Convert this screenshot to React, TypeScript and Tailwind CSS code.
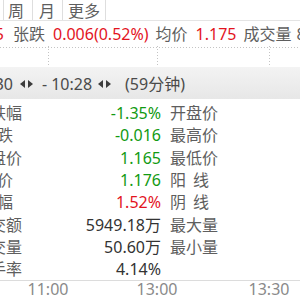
import React from "react";

type Tone = "green" | "red" | "dark";

const toneClass: Record<Tone, string> = {
  green: "text-[#129a12]",
  red: "text-[#e3141e]",
  dark: "text-[#333333]",
};

const rows: { label: string[]; value: string; tone: Tone; right: string[] }[] = [
  { label: ["涨跌幅"], value: "-1.35%", tone: "green", right: ["开盘价"] },
  { label: ["涨", "跌"], value: "-0.016", tone: "green", right: ["最高价"] },
  { label: ["收盘价"], value: "1.165", tone: "green", right: ["最低价"] },
  { label: ["均", "价"], value: "1.176", tone: "green", right: ["阳", "线"] },
  { label: ["振", "幅"], value: "1.52%", tone: "red", right: ["阴", "线"] },
  { label: ["成交额"], value: "5949.18万", tone: "dark", right: ["最大量"] },
  { label: ["成交量"], value: "50.60万", tone: "dark", right: ["最小量"] },
  { label: ["换手率"], value: "4.14%", tone: "dark", right: [] },
];

// two-char labels are spread with a half-width gap, like the original table
function Label({ parts }: { parts: string[] }) {
  if (parts.length < 2) return <>{parts[0]}</>;
  return (
    <>
      <span>{parts[0]}</span>
      <span className="ml-[7px]">{parts[1]}</span>
    </>
  );
}

function Arrows() {
  return (
    <svg width="13" height="8" viewBox="0 0 13 8" className="shrink-0">
      <polygon points="5,0 5,8 0,4" fill="#3c3c3c" />
      <polygon points="8,0 8,8 13,4" fill="#3c3c3c" />
    </svg>
  );
}

export default function App() {
  return (
    <div className="w-[300px] h-[300px] overflow-hidden bg-white font-['Noto_Sans','Noto_Sans_CJK_SC',sans-serif] text-[16px] leading-none text-[#5e5e5e] flex flex-col">
      {/* period tabs */}
      <div className="h-[21px] shrink-0 flex border-b border-[#e4e4e4]">
        <div className="w-[4px] border-r border-[#dedede]" />
        <div className="w-[29px] flex items-center pl-[4px] border-r border-[#dedede] pt-[2px]">周</div>
        <div className="w-[30px] flex items-center pl-[6px] border-r border-[#dedede] pt-[2px]">月</div>
        <div className="w-[43px] flex items-center pl-[5px] border-r border-[#dedede] pt-[2px]">更多</div>
      </div>

      {/* quote line */}
      <div className="h-[25px] shrink-0 flex items-center whitespace-nowrap">
        <span className="w-[42px] -ml-[38px] shrink-0 text-right text-[#e3141e]">1.165</span>
        <span className="ml-[9px]">张跌</span>
        <span className="ml-[8px] text-[#e3141e]">0.006(0.52%)</span>
        <span className="ml-[7px]">均价</span>
        <span className="ml-[8px] text-[#e3141e]">1.175</span>
        <span className="ml-[7px]">成交量</span>
        <span className="ml-[5px]">8</span>
      </div>

      {/* chart grid peeking above the panel */}
      <svg width="300" height="21" className="shrink-0 block">
        <line x1="0" y1="1.5" x2="300" y2="1.5" stroke="#c4c4c4" strokeDasharray="1 2" />
        <line x1="48.5" y1="0" x2="48.5" y2="21" stroke="#c4c4c4" strokeDasharray="1 2" />
        <line x1="157.5" y1="0" x2="157.5" y2="21" stroke="#c4c4c4" strokeDasharray="1 2" />
        <line x1="269.5" y1="0" x2="269.5" y2="21" stroke="#c4c4c4" strokeDasharray="1 2" />
      </svg>

      {/* info panel header */}
      <div className="h-[32px] shrink-0 flex items-center whitespace-nowrap bg-gradient-to-b from-[#f3f3f3] to-[#e7e7e7] text-[#4a4a4a] pt-[2px]">
        <span className="w-[42px] -ml-[29px] shrink-0 text-right">09:30</span>
        <span className="ml-[7px] flex"><Arrows /></span>
        <span className="ml-[9px]">-</span>
        <span className="ml-[4px]">10:28</span>
        <span className="ml-[6px] flex"><Arrows /></span>
        <span className="ml-[14px]">(59分钟)</span>
      </div>

      {/* info panel body */}
      <div className="flex-1 flex flex-col pt-[3px] whitespace-nowrap">
        {rows.map((r, i) => (
          <div key={i} className="h-[22.3px] flex items-center">
            <div className="w-[48px] -ml-[26px] shrink-0 flex">
              <Label parts={r.label} />
            </div>
            <div className={`w-[139px] shrink-0 text-right ${toneClass[r.tone]}`}>{r.value}</div>
            <div className="ml-[9px] flex">
              <Label parts={r.right} />
            </div>
          </div>
        ))}
      </div>

      {/* time axis */}
      <div className="h-[20px] shrink-0 border-t border-[#dcdcdc] flex items-start text-[#8a8a8a] whitespace-nowrap">
        <span className="ml-[27px] w-[42px] text-center">11:00</span>
        <span className="ml-[67px] w-[42px] text-center">13:00</span>
        <span className="ml-[70px] w-[42px] text-center">13:30</span>
      </div>
    </div>
  );
}
